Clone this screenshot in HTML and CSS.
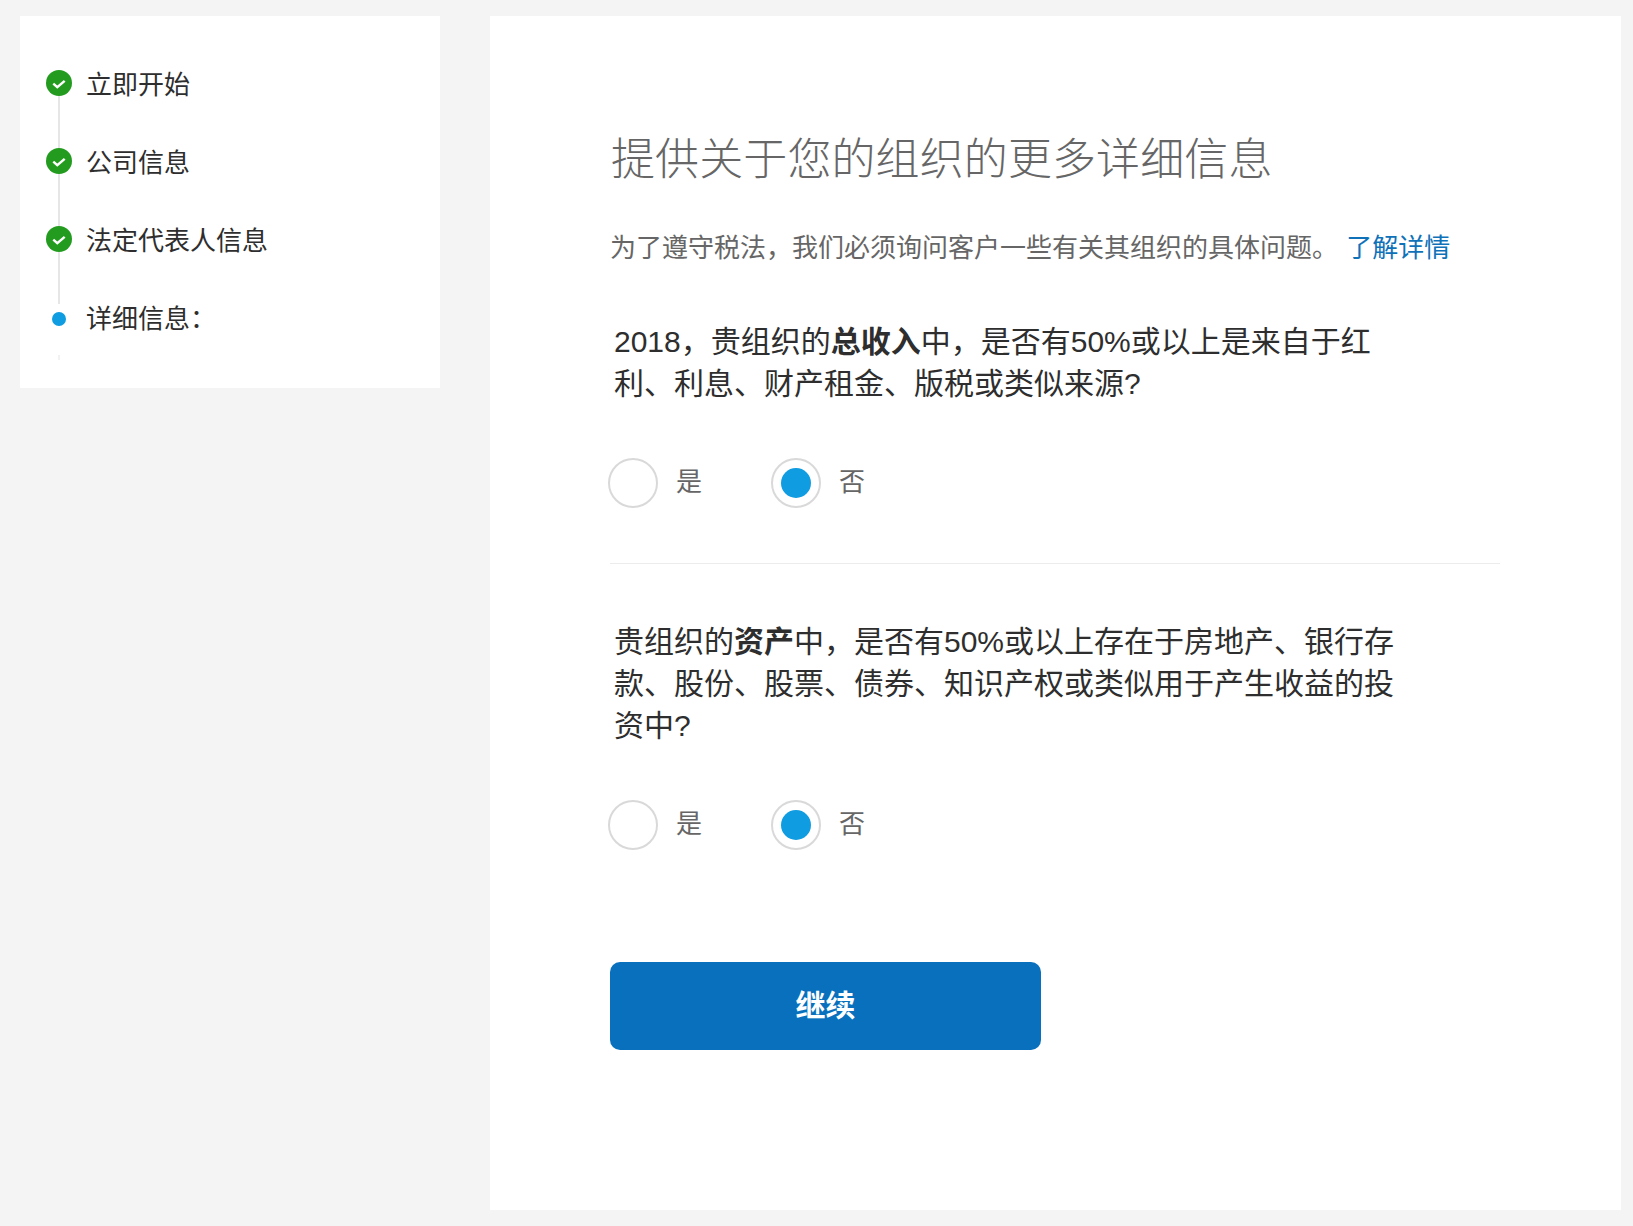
FILE: index.html
```html
<!DOCTYPE html>
<html lang="zh-CN">
  <head>
    <meta charset="UTF-8" />
    <meta name="viewport" content="width=device-width, initial-scale=1.0" />
    <title>详细信息</title>
    <link rel="stylesheet" href="styles.css">
  </head>
  <body>
    <aside class="sidebar">
      <div class="step">
        <div class="step-mark">
          <svg class="check" viewBox="0 0 26 26"><circle cx="13" cy="13" r="13" fill="#229b1e"/><path d="M7.3 13.6l4 3.6 7.4-6.4" fill="none" stroke="#fff" stroke-width="2.4"/></svg>
          <div class="step-line"></div>
        </div>
        <span>立即开始</span>
      </div>
      <div class="step">
        <div class="step-mark">
          <svg class="check" viewBox="0 0 26 26"><circle cx="13" cy="13" r="13" fill="#229b1e"/><path d="M7.3 13.6l4 3.6 7.4-6.4" fill="none" stroke="#fff" stroke-width="2.4"/></svg>
          <div class="step-line"></div>
        </div>
        <span>公司信息</span>
      </div>
      <div class="step">
        <div class="step-mark">
          <svg class="check" viewBox="0 0 26 26"><circle cx="13" cy="13" r="13" fill="#229b1e"/><path d="M7.3 13.6l4 3.6 7.4-6.4" fill="none" stroke="#fff" stroke-width="2.4"/></svg>
          <div class="step-line step-line-long"></div>
        </div>
        <span>法定代表人信息</span>
      </div>
      <div class="step step-last">
        <div class="step-mark">
          <div class="dot"></div>
          <div class="step-tail"></div>
        </div>
        <span>详细信息：</span>
      </div>
    </aside>

    <main class="content">
      <h1>提供关于您的组织的更多详细信息</h1>
      <p class="intro">为了遵守税法，我们必须询问客户一些有关其组织的具体问题。 <a href="#">了解详情</a></p>

      <form>
        <p class="question">2018，贵组织的<b>总收入</b>中，是否有50%或以上是来自于红利、利息、财产租金、版税或类似来源?</p>
        <div class="radios">
          <label class="radio"><input type="radio" name="q1" />是</label>
          <label class="radio"><input type="radio" name="q1" checked />否</label>
        </div>
        <hr />
        <p class="question">贵组织的<b>资产</b>中，是否有50%或以上存在于房地产、银行存款、股份、股票、债券、知识产权或类似用于产生收益的投资中?</p>
        <div class="radios">
          <label class="radio"><input type="radio" name="q2" />是</label>
          <label class="radio"><input type="radio" name="q2" checked />否</label>
        </div>
        <button type="button" class="continue">继续</button>
      </form>
    </main>
  </body>
</html>
```

FILE: styles.css
```css
* {
  box-sizing: border-box;
  margin: 0;
  padding: 0;
}

html,
body {
  height: 100%;
}

body {
  display: flex;
  align-items: flex-start;
  gap: 50px;
  padding: 16px 12px 16px 20px;
  background-color: #f4f4f4;
  color: #2e2e2e;
  font-family: "Liberation Sans", "Noto Sans CJK SC", sans-serif;
}

.sidebar {
  width: 420px;
  height: 372px;
  padding: 54px 0 0 26px;
  background: white;
}

.step {
  display: flex;
  gap: 14px;
  height: 78px;
  font-size: 26px;
  line-height: 26px;
}

.step span {
  margin-top: 2px;
}

.step-last {
  height: auto;
}

.step-mark {
  display: flex;
  flex-direction: column;
  align-items: center;
  width: 26px;
}

.check {
  display: block;
  flex: none;
  width: 26px;
  height: 26px;
}

.step-line {
  width: 2px;
  height: 52px;
  background: #e6e6e6;
}

.step-line-long {
  height: 60px;
}

.dot {
  width: 14px;
  height: 14px;
  margin-top: 8px;
  border-radius: 50%;
  background: #0f9ce0;
}

.step-tail {
  width: 2px;
  height: 5px;
  margin-top: 29px;
  background: #f2f2f2;
}

.content {
  flex: 1;
  height: 100%;
  padding: 114px 121px 0 120px;
  background: white;
}

h1 {
  margin: 0 0 40px 1px;
  color: #666;
  font-size: 44px;
  font-weight: 300;
  letter-spacing: 0.1px;
  line-height: 60px;
}

.intro {
  margin-bottom: 55px;
  color: #666;
  font-size: 26px;
  line-height: 36px;
}

.intro a {
  margin-left: 1px;
  color: #0f72b9;
  text-decoration: none;
}

.question {
  width: 788px;
  margin-left: 4px;
  font-size: 30px;
  line-height: 42px;
}

.radios {
  display: flex;
  gap: 69px;
  margin: 53px 0 0 -2px;
}

.radio {
  display: flex;
  align-items: flex-start;
  gap: 18px;
  color: #666;
  font-size: 26px;
  line-height: 48px;
}

.radio input {
  appearance: none;
  width: 50px;
  height: 50px;
  border: 2px solid #d9d9d9;
  border-radius: 50%;
  background: white;
}

.radio input:checked {
  border: 2px solid #d9d9d9;
  background: #0f9ce0;
  background-clip: content-box;
  padding: 8px;
}

hr {
  height: 1px;
  margin: 55px 0 57px;
  border: none;
  background: #eaeced;
}

.continue {
  display: block;
  width: 431px;
  height: 88px;
  margin-top: 112px;
  padding-bottom: 6px;
  border: none;
  border-radius: 10px;
  background: #0870bd;
  color: white;
  font-family: inherit;
  font-size: 30px;
  font-weight: bold;
}
```
